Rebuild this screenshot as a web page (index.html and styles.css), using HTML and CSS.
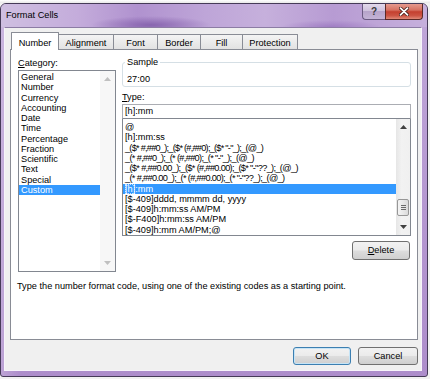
FILE: index.html
```html
<!DOCTYPE html>
<html>
<head>
<meta charset="utf-8">
<link rel="stylesheet" href="styles.css">
</head>
<body>
<div class="window">
  <div class="titlebar">
    <span class="title">Format Cells</span>
    <div class="caption-btns">
      <span class="cap help">?</span>
      <span class="cap close">
        <svg width="10" height="9" viewBox="0 0 10 9">
          <path d="M1.5 1.2 L8.5 7.8 M8.5 1.2 L1.5 7.8" stroke="#4a1f1a" stroke-width="3.4" stroke-linecap="round"/>
          <path d="M1.5 1.2 L8.5 7.8 M8.5 1.2 L1.5 7.8" stroke="#ffffff" stroke-width="1.8" stroke-linecap="round"/>
        </svg>
      </span>
    </div>
  </div>
  <div class="client">
    <div class="tabs">
      <div class="tab active w-number">Number</div>
      <div class="tab w-align">Alignment</div>
      <div class="tab w-font">Font</div>
      <div class="tab w-border">Border</div>
      <div class="tab w-fill">Fill</div>
      <div class="tab w-prot">Protection</div>
    </div>
    <div class="panel">
      <div class="cat-col">
        <div class="label"><u>C</u>ategory:</div>
        <div class="listbox cat-list">
          <div class="items">
            <div class="item">General</div>
            <div class="item">Number</div>
            <div class="item">Currency</div>
            <div class="item">Accounting</div>
            <div class="item">Date</div>
            <div class="item">Time</div>
            <div class="item">Percentage</div>
            <div class="item">Fraction</div>
            <div class="item">Scientific</div>
            <div class="item">Text</div>
            <div class="item">Special</div>
            <div class="item selected">Custom</div>
          </div>
          <div class="scrollbar disabled">
            <div class="sb-btn">
              <svg width="7" height="4" viewBox="0 0 7 4"><path d="M0 4 L3.5 0 L7 4 Z" fill="#c0c0c0"/></svg>
            </div>
            <div class="sb-track"></div>
            <div class="sb-btn">
              <svg width="7" height="4" viewBox="0 0 7 4"><path d="M0 0 L7 0 L3.5 4 Z" fill="#c0c0c0"/></svg>
            </div>
          </div>
        </div>
      </div>
      <div class="right-col">
        <fieldset class="sample">
          <legend>Sample</legend>
          <div class="sample-value">27:00</div>
        </fieldset>
        <div class="label type-label"><u>T</u>ype:</div>
        <div class="type-input">[h]:mm</div>
        <div class="listbox type-list">
          <div class="items">
            <div class="item">@</div>
            <div class="item">[h]:mm:ss</div>
            <div class="item tighter">_($* #,##0_);_($* (#,##0);_($* "-"_);_(@_)</div>
            <div class="item tight">_(* #,##0_);_(* (#,##0);_(* "-"_);_(@_)</div>
            <div class="item tight">_($* #,##0.00_);_($* (#,##0.00);_($* "-"??_);_(@_)</div>
            <div class="item tight">_(* #,##0.00_);_(* (#,##0.00);_(* "-"??_);_(@_)</div>
            <div class="item selected"><span class="caret-sel">[h]</span>:mm</div>
            <div class="item">[$-409]dddd, mmmm dd, yyyy</div>
            <div class="item">[$-409]h:mm:ss AM/PM</div>
            <div class="item">[$-F400]h:mm:ss AM/PM</div>
            <div class="item">[$-409]h:mm AM/PM;@</div>
          </div>
          <div class="scrollbar">
            <div class="sb-btn">
              <svg width="7" height="4" viewBox="0 0 7 4"><path d="M0 4 L3.5 0 L7 4 Z" fill="#404040"/></svg>
            </div>
            <div class="sb-track">
              <div class="sb-thumb"><i></i><i></i><i></i></div>
            </div>
            <div class="sb-btn">
              <svg width="7" height="4" viewBox="0 0 7 4"><path d="M0 0 L7 0 L3.5 4 Z" fill="#404040"/></svg>
            </div>
          </div>
        </div>
        <div class="btn delete"><u>D</u>elete</div>
      </div>
      <p class="desc">Type the number format code, using one of the existing codes as a starting point.</p>
    </div>
    <div class="buttons">
      <div class="btn default ok">OK</div>
      <div class="btn cancel">Cancel</div>
    </div>
  </div>
</div>
</body>
</html>
```
FILE: styles.css
```css
html, body {
  margin: 0;
  padding: 0;
}
body {
  width: 430px;
  height: 379px;
  overflow: hidden;
  background: linear-gradient(#ffffff 0, #e9e9e9 3px, #f2f2f2 3px);
  font-family: "Liberation Sans", Arial, sans-serif;
  font-size: 9.2px;
  color: #000;
  padding-top: 3px;
  box-sizing: border-box;
}

.window {
  box-sizing: border-box;
  width: 428px;
  height: 374px;
  border: 1px solid #463b58;
  border-radius: 6px 6px 3px 3px;
  padding: 0 5px 5px 3px;
  display: flex;
  flex-direction: column;
  background:
    linear-gradient(to right, rgba(255,255,255,0.2), rgba(255,255,255,0) 20px),
    linear-gradient(#c0a7d9, #b496d0 60%, #ad8dcb);
}

.titlebar {
  height: 23px;
  display: flex;
  align-items: flex-start;
  margin: 0 -5px 0 -3px;
  padding: 0 4px 0 4px;
  border-radius: 5px 5px 0 0;
  background:
    radial-gradient(ellipse 60px 9px at 150px 21px, rgba(118, 80, 160, 0.7), rgba(118, 80, 160, 0) 100%),
    radial-gradient(ellipse 50px 7px at 330px 23px, rgba(140, 100, 182, 0.55), rgba(140, 100, 182, 0) 100%),
    linear-gradient(to right, #cfbfe1 0%, #c4acdb 18%, #b092cf 32%, #bea5d8 48%, #c6b0dc 62%, #b79bd3 78%, #c6b0dc 100%);
}
.title {
  margin-top: 5px;
  margin-left: 1px;
  line-height: 12px;
  color: #000;
}
.caption-btns {
  margin-left: auto;
  margin-right: 0;
  display: flex;
}
.cap {
  box-sizing: border-box;
  height: 16px;
  display: flex;
  align-items: center;
  justify-content: center;
}
.help {
  width: 23px;
  border: 1px solid #6a5a80;
  border-top: none;
  border-right: none;
  border-radius: 0 0 0 4px;
  background: linear-gradient(#e2d9eb 0%, #cfc2dd 45%, #b7a4ca 50%, #c4b3d6 100%);
  color: #3a3a3a;
  font-weight: bold;
  font-size: 10px;
  padding-bottom: 1px;
}
.close {
  width: 38px;
  border: 1px solid #5a2a26;
  border-top: none;
  border-radius: 0 0 4px 0;
  background: linear-gradient(#e59a8e 0%, #d77262 40%, #c4402f 52%, #cc5443 78%, #e08a78 100%);
}

.client {
  flex: 1;
  display: flex;
  flex-direction: column;
  background: #f0f0f0;
  border: 1px solid #f7f4fa;
  border-top-color: #8c7ca4;
}

.tabs {
  display: flex;
  align-items: flex-end;
  height: 17px;
  margin: 4px 0 0 6px;
}
.tab {
  box-sizing: border-box;
  height: 15px;
  border: 1px solid #898c95;
  border-bottom: none;
  margin-left: -1px;
  padding-top: 2px;
  line-height: 12px;
  text-align: center;
  background: linear-gradient(#f4f4f4, #e2e2e2);
  border-radius: 1px 1px 0 0;
}
.tab.active {
  height: 18px;
  margin-left: 0;
  margin-bottom: -1px;
  padding-top: 4px;
  background: #ffffff;
  position: relative;
  z-index: 1;
}
.w-number { width: 48px; }
.w-align { width: 56px; }
.w-font { width: 45px; }
.w-border { width: 44px; }
.w-fill { width: 43px; }
.w-prot { width: 56px; }

.panel {
  box-sizing: border-box;
  height: 291px;
  margin: 0 3px 0 5px;
  background: #ffffff;
  border: 1px solid #898c95;
  display: grid;
  grid-template-columns: 98px 289px;
  column-gap: 6px;
  align-content: start;
  padding: 7px 6px 0 7px;
}

.label {
  line-height: 12px;
  margin-bottom: 1px;
}

.listbox {
  box-sizing: border-box;
  border: 1px solid #828790;
  background: #fff;
  display: grid;
  overflow: hidden;
}
.cat-list {
  height: 202px;
  grid-template-columns: 81px 15px;
}
.type-list {
  height: 117px;
  border-top: none;
  grid-template-columns: 273px 14px;
}
.items {
  padding-top: 1px;
  overflow: hidden;
}
.type-list .items {
  padding-top: 3px;
}
.item {
  height: 10.25px;
  line-height: 10.25px;
  padding-left: 2px;
  white-space: nowrap;
}
.item.tight {
  letter-spacing: -0.65px;
}
.item.tighter {
  letter-spacing: -0.75px;
}
.item.selected {
  background: #3399ff;
  color: #ffffff;
}
.caret-sel {
  outline: 1px dotted rgba(255, 255, 255, 0.7);
  outline-offset: -1px;
}

.scrollbar {
  display: grid;
  grid-template-rows: 16px 1fr 16px;
  background: linear-gradient(to right, #e6e6e6, #f2f2f2 40%, #f0f0f0);
}
.scrollbar.disabled {
  background: #f7f7f7;
}
.sb-btn {
  display: flex;
  align-items: center;
  justify-content: center;
}
.sb-track {
  display: flex;
  flex-direction: column;
}
.sb-thumb {
  box-sizing: border-box;
  margin: 64px 1px 0 1px;
  height: 17px;
  border: 1px solid #979797;
  border-radius: 2px;
  background: linear-gradient(to right, #f4f4f4, #e8e8e8 50%, #dadada);
  display: flex;
  flex-direction: column;
  align-items: center;
  justify-content: center;
  gap: 1px;
}
.sb-thumb i {
  display: block;
  width: 5px;
  height: 1px;
  background: #6a6a6a;
}

.sample {
  margin: 0;
  padding: 0 2px 1px 2px;
  border: 1px solid #d5dfe5;
  border-radius: 3px;
  min-inline-size: 0;
}
.sample legend {
  padding: 0 2px;
  line-height: 10px;
  margin-left: 0;
}
.sample-value {
  line-height: 12px;
  padding: 6px 0 0 2px;
}
.type-label {
  margin-top: 4px;
}
.type-input {
  box-sizing: border-box;
  height: 15px;
  border: 1px solid #abadb3;
  border-bottom-color: #828790;
  line-height: 13px;
  padding-left: 2px;
}

.btn {
  box-sizing: border-box;
  border: 1px solid #707070;
  border-radius: 3px;
  background: linear-gradient(#f2f2f2 0%, #ebebeb 48%, #dddddd 52%, #cfcfcf 100%);
  text-align: center;
}
.delete {
  width: 58px;
  height: 19px;
  line-height: 17px;
  margin: 5px 1px 0 auto;
}
.desc {
  grid-column: 1 / 3;
  margin: 8px 0 0 -1px;
  line-height: 12px;
}

.buttons {
  display: flex;
  justify-content: flex-end;
  gap: 7px;
  margin-top: 7px;
  padding-right: 3px;
}
.buttons .btn {
  height: 18px;
  line-height: 16px;
}
.ok {
  width: 58px;
}
.cancel {
  width: 60px;
}
.btn.default {
  border-color: #3c7fb1;
  box-shadow: inset 0 0 0 1px #c6e4f6;
}
```
